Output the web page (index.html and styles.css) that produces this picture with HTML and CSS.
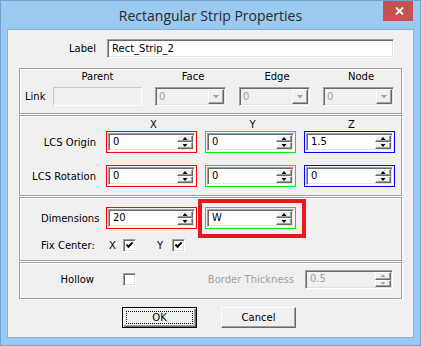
FILE: index.html
```html
<!DOCTYPE html>
<html lang="en">
<head>
    <meta charset="UTF-8">
    <title>Rectangular Strip Properties</title>
    <link rel="stylesheet" href="styles.css">
</head>
<body>
    <div class="window">
        <div class="titlebar">
            <span class="title">Rectangular Strip Properties</span>
            <div class="close">
                <svg width="9" height="8" viewBox="0 0 9 8">
                    <path d="M1 0.5 L8 7.5 M8 0.5 L1 7.5" stroke="#fff" stroke-width="1.8" fill="none"/>
                </svg>
            </div>
        </div>

        <div class="client">
            <div class="label-row">
                <span class="label-text">Label</span>
                <div class="edit sunken">Rect_Strip_2</div>
            </div>

            <!-- link -->
            <div class="group link-group">
                <div class="hdr-row">
                    <span class="link-lbl"></span>
                    <span class="hdr parent-col">Parent</span>
                    <span class="hdr combo-col">Face</span>
                    <span class="hdr combo-col">Edge</span>
                    <span class="hdr combo-col">Node</span>
                </div>
                <div class="ctl-row">
                    <span class="link-lbl">Link</span>
                    <div class="parent-field"></div>
                    <div class="combo sunken"><span class="val">0</span><span class="drop raised"></span></div>
                    <div class="combo sunken"><span class="val">0</span><span class="drop raised"></span></div>
                    <div class="combo sunken"><span class="val">0</span><span class="drop raised"></span></div>
                </div>
            </div>

            <!-- local coordinate system -->
            <div class="group axes-group">
                <div class="axis-hdr">
                    <span class="row-label"></span>
                    <span class="axis">X</span>
                    <span class="axis">Y</span>
                    <span class="axis">Z</span>
                </div>
                <div class="row">
                    <span class="row-label">LCS Origin</span>
                    <div class="frame red"><div class="spin sunken"><span class="val">0</span><span class="spin-btns"><i class="up raised"></i><i class="down raised"></i></span></div></div>
                    <div class="frame green"><div class="spin sunken"><span class="val">0</span><span class="spin-btns"><i class="up raised"></i><i class="down raised"></i></span></div></div>
                    <div class="frame blue"><div class="spin sunken"><span class="val">1.5</span><span class="spin-btns"><i class="up raised"></i><i class="down raised"></i></span></div></div>
                </div>
                <div class="row">
                    <span class="row-label">LCS Rotation</span>
                    <div class="frame red"><div class="spin sunken"><span class="val">0</span><span class="spin-btns"><i class="up raised"></i><i class="down raised"></i></span></div></div>
                    <div class="frame green"><div class="spin sunken"><span class="val">0</span><span class="spin-btns"><i class="up raised"></i><i class="down raised"></i></span></div></div>
                    <div class="frame blue"><div class="spin sunken"><span class="val">0</span><span class="spin-btns"><i class="up raised"></i><i class="down raised"></i></span></div></div>
                </div>
            </div>

            <!-- dimensions -->
            <div class="group dim-group">
                <div class="row">
                    <span class="row-label left">Dimensions</span>
                    <div class="frame red"><div class="spin sunken"><span class="val">20</span><span class="spin-btns"><i class="up raised"></i><i class="down raised"></i></span></div></div>
                    <div class="frame green"><div class="spin sunken"><span class="val">W</span><span class="spin-btns"><i class="up raised"></i><i class="down raised"></i></span></div></div>
                </div>
                <div class="fix-row">
                    <span class="fix-label">Fix Center:</span>
                    <span class="axis-x">X</span>
                    <span class="check sunken on">
                        <svg width="9" height="9" viewBox="0 0 9 9"><path d="M1.5 3.5 L3.5 5.8 L7.6 1.4" stroke="#000" stroke-width="2" fill="none"/></svg>
                    </span>
                    <span class="axis-y">Y</span>
                    <span class="check sunken on">
                        <svg width="9" height="9" viewBox="0 0 9 9"><path d="M1.5 3.5 L3.5 5.8 L7.6 1.4" stroke="#000" stroke-width="2" fill="none"/></svg>
                    </span>
                </div>
                <div class="annotation"></div>
            </div>

            <!-- hollow -->
            <div class="group hollow-group">
                <div class="row">
                    <span class="row-label hollow-lbl">Hollow</span>
                    <span class="check-col"><span class="check sunken"></span></span>
                    <span class="thick-lbl">Border Thickness</span>
                    <div class="spin sunken disabled"><span class="val">0.5</span><span class="spin-btns"><i class="up raised"></i><i class="down raised"></i></span></div>
                </div>
            </div>

            <div class="buttons">
                <div class="btn default"><span class="focus">OK</span></div>
                <div class="btn">Cancel</div>
            </div>
        </div>
    </div>
</body>
</html>
```

FILE: styles.css
```css
* {
    box-sizing: border-box;
}
body {
    margin: 0;
    width: 421px;
    height: 346px;
    overflow: hidden;
    font-family: "DejaVu Sans", sans-serif;
    font-size: 10px;
    line-height: 13px;
    color: #000;
}
.window {
    width: 421px;
    height: 346px;
    background-color: #9bc9ef;
    border: 1px solid #71a0d2;
    padding: 0 6px 7px;
    display: flex;
    flex-direction: column;
}
.titlebar {
    height: 28px;
    position: relative;
    display: flex;
    align-items: center;
    justify-content: center;
}
.title {
    font-family: "Open Sans", sans-serif;
    font-size: 14px;
    color: #2b2b2b;
    margin-top: 1px;
}
.close {
    position: absolute;
    top: 0;
    right: 1px;
    width: 30px;
    height: 20px;
    background-color: #c75050;
    display: flex;
    align-items: center;
    justify-content: center;
    padding-left: 2px;
}
.client {
    flex: 1;
    background-color: #f0f0f0;
    border: 1px solid #86b0db;
    padding: 9px 11px 0 11px;
}

/* bevels */
.sunken {
    border: 1px solid;
    border-color: #a0a0a0 #fff #fff #a0a0a0;
    box-shadow: inset 1px 1px 0 #696969, inset -1px -1px 0 #e3e3e3;
}
.raised {
    border: 1px solid;
    border-color: #fff #696969 #696969 #fff;
    box-shadow: inset -1px -1px 0 #a0a0a0;
    background-color: #f0f0f0;
}

.label-row {
    display: flex;
    align-items: center;
    height: 19px;
}
.label-text {
    width: 77px;
    text-align: right;
}
.edit {
    margin-left: 11px;
    width: 287px;
    height: 19px;
    background-color: #fff;
    padding: 2px 4px;
    line-height: 13px;
}

/* group boxes */
.group {
    border: 1px solid #a0a0a0;
    box-shadow: inset 1px 1px 0 #fff, 1px 1px 0 #fff;
    margin-top: 1px;
}
.link-group {
    margin-top: 10px;
    padding: 1px 0 7px 5px;
}
.hdr-row, .ctl-row {
    display: flex;
    gap: 13px;
    align-items: center;
}
.hdr-row {
    height: 13px;
    margin-bottom: 4px;
}
.link-lbl {
    width: 15px;
    white-space: nowrap;
}
.hdr {
    text-align: center;
}
.parent-col {
    width: 89px;
}
.combo-col {
    width: 71px;
    padding-left: 5px;
}
.parent-field {
    width: 89px;
    height: 19px;
    border: 1px solid;
    border-color: #c8c8c8 #fff #fff #c8c8c8;
    background-color: #f0f0f0;
}
.combo {
    width: 71px;
    height: 19px;
    background-color: #f0f0f0;
    display: flex;
    padding: 1px;
}
.combo .val {
    flex: 1;
    color: #a0a0a0;
    padding-left: 2px;
    line-height: 15px;
}
.drop {
    width: 16px;
    display: flex;
    align-items: center;
    justify-content: center;
}
.drop::after {
    content: "";
    width: 7px;
    height: 4px;
    background-color: #a0a0a0;
    clip-path: polygon(0 0, 100% 0, 50% 100%);
}

/* spin boxes */
.axes-group {
    padding: 2px 0 8px 0;
}
.axis-hdr {
    display: flex;
    gap: 8px;
    height: 13px;
}
.axis {
    width: 91px;
    text-align: center;
    padding-left: 4px;
}
.row {
    display: flex;
    gap: 8px;
    align-items: center;
}
.row + .row {
    margin-top: 12px;
}
.row-label {
    width: 78px;
    text-align: right;
    padding-right: 2px;
    white-space: nowrap;
}
.row-label.left {
    text-align: left;
    padding-left: 21px;
}
.frame {
    width: 91px;
    height: 22px;
    border: 1px solid;
    padding: 1px;
}
.frame.red {
    border-color: #ff0000;
}
.frame.green {
    border-color: #00f000;
}
.frame.blue {
    border-color: #0000ff;
}
.spin {
    height: 100%;
    display: flex;
    background-color: #fff;
    padding: 1px;
}
.spin .val {
    flex: 1;
    padding-left: 3px;
    line-height: 14px;
}
.spin-btns {
    width: 16px;
    display: flex;
    flex-direction: column;
}
.spin-btns i {
    flex: 1;
    display: flex;
    align-items: center;
    justify-content: center;
}
.spin-btns i::after {
    content: "";
    width: 5px;
    height: 3px;
    background-color: #000;
}
.spin-btns .up::after {
    clip-path: polygon(50% 0, 100% 100%, 0 100%);
}
.spin-btns .down::after {
    clip-path: polygon(0 0, 100% 0, 50% 100%);
}

/* dimensions */
.dim-group {
    position: relative;
    padding: 9px 0 8px 0;
}
.fix-row {
    display: flex;
    align-items: center;
    height: 13px;
    margin-top: 10px;
    padding-left: 21px;
}
.fix-label {
    width: 68px;
}
.axis-x {
    width: 14px;
}
.axis-y {
    width: 15px;
    margin-left: 21px;
}
.check {
    width: 13px;
    height: 13px;
    background-color: #fff;
    display: flex;
    align-items: center;
    justify-content: center;
}
.annotation {
    position: absolute;
    left: 178px;
    top: 1px;
    width: 108px;
    height: 39px;
    border: 4px solid #e8161f;
}

/* hollow */
.hollow-group {
    padding: 7px 0 9px 0;
}
.hollow-lbl {
    padding-right: 4px;
}
.check-col {
    width: 91px;
    padding-left: 17px;
}
.thick-lbl {
    width: 91px;
    text-align: right;
    padding-right: 2px;
    color: #a0a0a0;
    white-space: nowrap;
}
.spin.disabled {
    width: 88px;
    height: 19px;
    margin-left: 1px;
    background-color: #f0f0f0;
}
.spin.disabled .val {
    color: #a0a0a0;
}
.spin.disabled .spin-btns i::after {
    background-color: #a0a0a0;
}

/* buttons */
.buttons {
    display: flex;
    justify-content: center;
    gap: 24px;
    margin-top: 8px;
    padding-right: 3px;
}
.btn {
    width: 75px;
    height: 21px;
    background-color: #f0f0f0;
    border: 1px solid;
    border-color: #fff #696969 #696969 #fff;
    box-shadow: inset -1px -1px 0 #a0a0a0;
    display: flex;
    align-items: center;
    justify-content: center;
}
.btn.default {
    border-color: #000;
    box-shadow: inset 1px 1px 0 #fff, inset -1px -1px 0 #696969, inset -2px -2px 0 #a0a0a0;
    padding: 3px;
}
.focus {
    flex: 1;
    align-self: stretch;
    border: 1px dotted #000;
    display: flex;
    align-items: center;
    justify-content: center;
}
```
